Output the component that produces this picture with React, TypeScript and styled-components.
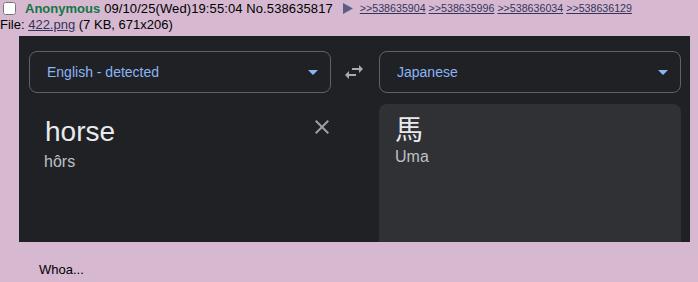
import React from "react";
import styled, { createGlobalStyle } from "styled-components";

const Global = createGlobalStyle`
  html, body { margin: 0; padding: 0; background: #d6b9d0; }
  body {
    font-family: "Liberation Sans", Arial, sans-serif;
    font-size: 13px;
    color: #000;
  }
`;

const Post = styled.div`
  width: 698px;
  height: 282px;
  overflow: hidden;
`;

const PostInfo = styled.div`
  display: flex;
  align-items: center;
  height: 17px;
  line-height: 17px;
  white-space: nowrap;
`;

const Check = styled.input`
  width: 13px;
  height: 13px;
  margin: 0 0 0 3px;
`;

const Name = styled.span`
  color: #117743;
  font-weight: bold;
  margin-left: 9px;
`;

const DateTime = styled.span`
  margin-left: 4px;
  letter-spacing: 0.1px;
`;

const MenuArrow = styled.svg`
  margin-left: 10px;
  display: block;
`;

const Backlinks = styled.span`
  display: flex;
  gap: 3px;
  margin-left: 7px;
  font-size: 10.67px;
`;

const Link = styled.a`
  color: #34345c;
  text-decoration: underline;
`;

const FileText = styled.div`
  height: 15px;
  line-height: 15px;
  white-space: nowrap;
`;

const Thumb = styled.div`
  box-sizing: border-box;
  width: 671px;
  height: 206px;
  margin: 4px 0 0 19px;
  padding: 15px 9px 0 10px;
  background: #202124;
  overflow: hidden;
  display: grid;
  grid-template-columns: 302px 1fr 302px;
  grid-template-rows: 42px 1fr;
  row-gap: 11px;
  font-family: "Liberation Sans", Arial, "Noto Sans CJK JP", sans-serif;
`;

const LangSelect = styled.div`
  box-sizing: border-box;
  display: flex;
  align-items: center;
  border: 1px solid #5f6368;
  border-radius: 8px;
  padding: 0 12px 0 17px;
  color: #8ab4f8;
  font-size: 14px;
`;

const LangLabel = styled.span`
  flex: 1;
`;

const SwapButton = styled.div`
  justify-self: center;
  align-self: center;
  width: 24px;
  height: 24px;
  margin-right: 2px;
  color: #a8abaf;
`;

const InputPane = styled.div`
  grid-column: 1;
  display: flex;
  align-items: flex-start;
  padding: 10px 2px 0 15px;
`;

const TextBlock = styled.div`
  flex: 1;
`;

const SourceText = styled.div`
  font-size: 28px;
  line-height: 36px;
  color: #e8eaed;
  margin-left: 1px;
`;

const Translit = styled.div<{ $lh: number }>`
  font-size: 16px;
  line-height: ${(p) => p.$lh}px;
  color: #bdc1c6;
`;

const CloseButton = styled.div`
  margin-top: 6px;
  width: 14px;
  height: 14px;
  color: #9aa0a6;
`;

const OutputPane = styled.div`
  grid-column: 3;
  background: #303134;
  border-radius: 8px 8px 0 0;
  padding: 11px 16px 0;
  min-height: 200px;
`;

const TargetText = styled.div`
  font-size: 28px;
  line-height: 32px;
  color: #e8eaed;
`;

const Message = styled.div`
  margin: 20px 0 0 39px;
  line-height: 15px;
`;

const DropArrow = () => (
  <svg width="10" height="5" viewBox="7 10 10 5">
    <path d="M7 10l5 5 5-5z" fill="#8ab4f8" />
  </svg>
);

export default function App() {
  return (
    <>
      <Global />
      <Post>
        <PostInfo>
          <Check type="checkbox" />
          <Name>Anonymous</Name>
          <DateTime>09/10/25(Wed)19:55:04 No.538635817</DateTime>
          <MenuArrow width="10" height="11" viewBox="0 0 10 11">
            <polygon points="0,0 10,5.5 0,11" fill="#5c5c88" />
          </MenuArrow>
          <Backlinks>
            <Link href="#">&gt;&gt;538635904</Link>
            <Link href="#">&gt;&gt;538635996</Link>
            <Link href="#">&gt;&gt;538636034</Link>
            <Link href="#">&gt;&gt;538636129</Link>
          </Backlinks>
        </PostInfo>
        <FileText>
          File: <Link href="#">422.png</Link> (7 KB, 671x206)
        </FileText>
        <Thumb>
          <LangSelect>
            <LangLabel>English - detected</LangLabel>
            <DropArrow />
          </LangSelect>
          <SwapButton>
            <svg width="24" height="24" viewBox="0 0 24 24">
              <path
                d="M6.99 11L3 15l3.99 4v-3H14v-2H6.99v-3zM21 9l-3.99-4v3H10v2h7.01v3L21 9z"
                fill="currentColor"
              />
            </svg>
          </SwapButton>
          <LangSelect>
            <LangLabel>Japanese</LangLabel>
            <DropArrow />
          </LangSelect>
          <InputPane>
            <TextBlock>
              <SourceText>horse</SourceText>
              <Translit $lh={24}>hôrs</Translit>
            </TextBlock>
            <CloseButton>
              <svg width="14" height="14" viewBox="5 5 14 14">
                <path
                  d="M19 6.41L17.59 5 12 10.59 6.41 5 5 6.41 10.59 12 5 17.59 6.41 19 12 13.41 17.59 19 19 17.59 13.41 12z"
                  fill="currentColor"
                />
              </svg>
            </CloseButton>
          </InputPane>
          <OutputPane>
            <TargetText>馬</TargetText>
            <Translit $lh={20}>Uma</Translit>
          </OutputPane>
        </Thumb>
        <Message>Whoa...</Message>
      </Post>
    </>
  );
}
